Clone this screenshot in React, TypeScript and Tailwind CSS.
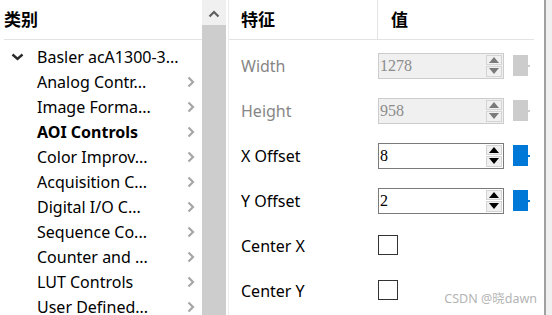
const latin = "font-['Noto_Sans','Noto_Sans_CJK_SC',sans-serif]";

const treeItems = [
  { name: "Analog Contr...", bold: false },
  { name: "Image Forma...", bold: false },
  { name: "AOI Controls", bold: true },
  { name: "Color Improv...", bold: false },
  { name: "Acquisition C...", bold: false },
  { name: "Digital I/O C...", bold: false },
  { name: "Sequence Co...", bold: false },
  { name: "Counter and ...", bold: false },
  { name: "LUT Controls", bold: false },
  { name: "User Defined...", bold: false },
];

function ChevronRight() {
  return (
    <svg width="10" height="12" viewBox="0 0 10 12" className="shrink-0">
      <path d="M2.5 1.5 L7 6 L2.5 10.5" fill="none" stroke="#a6a6a6" strokeWidth="2.2" />
    </svg>
  );
}

function SpinBox({ value, disabled }: { value: string; disabled?: boolean }) {
  const arrow = disabled ? "#7a7a7a" : "#000000";
  return (
    <div
      className={
        "flex h-[26px] w-[126px] border " +
        (disabled ? "border-[#cccccc] bg-[#f0f0f0]" : "border-[#7a7a7a] bg-white")
      }
    >
      <div
        className={
          "flex-1 pl-[1px] leading-[24px] text-[16px] font-['Liberation_Serif',serif] " +
          (disabled ? "text-[#8c8c8c]" : "text-black")
        }
      >
        {value}
      </div>
      <div className="flex w-[18px] flex-col gap-[1px] p-[1px]">
        <div className="flex flex-1 items-center justify-center border border-[#d4d4d4] bg-[#f0f0f0]">
          <svg width="10" height="6" viewBox="0 0 10 6">
            <path d="M0 6 L5 0 L10 6 Z" fill={arrow} />
          </svg>
        </div>
        <div className="flex flex-1 items-center justify-center border border-[#d4d4d4] bg-[#f0f0f0]">
          <svg width="10" height="6" viewBox="0 0 10 6">
            <path d="M0 0 L5 6 L10 0 Z" fill={arrow} />
          </svg>
        </div>
      </div>
    </div>
  );
}

function Swatch({ color }: { color: string }) {
  return (
    <div className="flex items-center">
      <div className={"h-[21px] w-[15px] " + color} />
      <div className={"h-[2px] w-[2px] " + color} />
    </div>
  );
}

const rows = [
  { label: "Width", kind: "spin", value: "1278", disabled: true },
  { label: "Height", kind: "spin", value: "958", disabled: true },
  { label: "X Offset", kind: "spin", value: "8", disabled: false },
  { label: "Y Offset", kind: "spin", value: "2", disabled: false },
  { label: "Center X", kind: "check", value: "", disabled: false },
  { label: "Center Y", kind: "check", value: "", disabled: false },
];

export default function App() {
  return (
    <div className={"relative flex h-[315px] w-[552px] overflow-hidden bg-white " + latin}>
      {/* category tree */}
      <div className="flex w-[202px] shrink-0 flex-col">
        <div className="ml-[4px] flex h-[40px] shrink-0 items-center border-b border-[#e3e3e3] pb-[2px] text-[17px] font-bold font-['Noto_Sans_CJK_SC',sans-serif]">
          类别
        </div>
        <div className="flex shrink-0 flex-col pt-[4px] text-[16px] text-black">
          <div className="flex h-[25px] items-center">
            <div className="flex w-[37px] justify-center pr-[3px]">
              <svg width="13" height="8" viewBox="0 0 13 8">
                <path d="M1.5 1.5 L6.5 6 L11.5 1.5" fill="none" stroke="#2b2b2b" strokeWidth="2.4" />
              </svg>
            </div>
            <span>Basler acA1300-3...</span>
          </div>
          {treeItems.map((it) => (
            <div key={it.name} className="flex h-[25px] items-center pl-[37px] pr-[6px]">
              <span className={"flex-1 whitespace-nowrap " + (it.bold ? "font-bold" : "")}>{it.name}</span>
              <ChevronRight />
            </div>
          ))}
        </div>
      </div>

      {/* scrollbar */}
      <div className="flex w-[24px] shrink-0 flex-col bg-[#f0f0f0]">
        <div className="flex h-[25px] shrink-0 items-center justify-center pt-[2px]">
          <svg width="12" height="8" viewBox="0 0 12 8">
            <path d="M1.5 6.5 L6 2 L10.5 6.5" fill="none" stroke="#606060" strokeWidth="2.2" />
          </svg>
        </div>
        <div className="flex-1 bg-[#cdcdcd]" />
      </div>

      {/* feature grid */}
      <div className="ml-[2px] flex w-[316px] shrink-0 flex-col border-l border-[#ececec]">
        <div className="flex h-[40px] w-[305px] shrink-0 border-b border-[#e3e3e3] text-[17px] font-bold font-['Noto_Sans_CJK_SC',sans-serif]">
          <div className="flex w-[149px] items-center border-r border-[#e3e3e3] pb-[2px] pl-[12px]">特征</div>
          <div className="flex items-center pb-[2px] pl-[13px]">值</div>
        </div>
        <div className="flex shrink-0 flex-col pt-[3px] text-[16px]">
          {rows.map((r) => (
            <div key={r.label} className="flex h-[45px] items-center">
              <div className={"w-[149px] pl-[12px] " + (r.disabled ? "text-[#868686]" : "text-black")}>
                {r.label}
              </div>
              {r.kind === "spin" ? (
                <div className="flex items-center gap-[9px]">
                  <SpinBox value={r.value} disabled={r.disabled} />
                  <Swatch color={r.disabled ? "bg-[#cccccc]" : "bg-[#0078d7]"} />
                </div>
              ) : (
                <div className="mb-[2px] h-[20px] w-[20px] border border-[#333333] bg-white" />
              )}
            </div>
          ))}
        </div>
      </div>

      <div className="w-[2px] shrink-0 bg-[#a0a0a0]" />
      <div className="flex-1 bg-[#f0f0f0]" />

      <div className="absolute bottom-[6px] right-[15px] text-[12.5px] text-[#b4b4b4] font-['Noto_Sans','Noto_Sans_CJK_SC',sans-serif]">
        CSDN @晓dawn
      </div>
    </div>
  );
}
